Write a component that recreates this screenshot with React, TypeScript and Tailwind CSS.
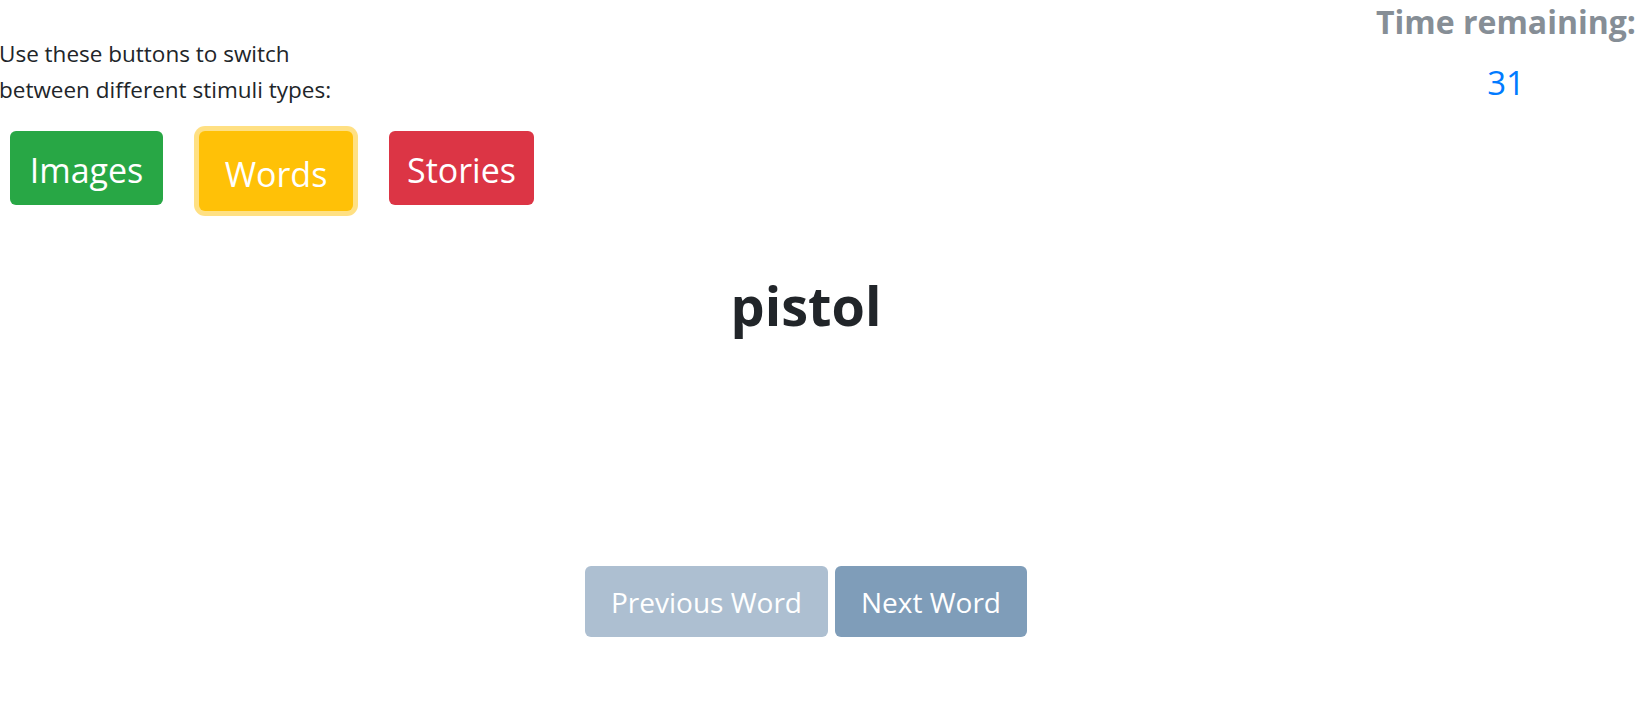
const font = { fontFamily: '"Open Sans", "Noto Sans", sans-serif' };

export default function App() {
  return (
    <div className="w-[1652px] h-[713px] overflow-hidden bg-white text-[#212529]" style={font}>
      <div className="flex justify-between">
        <div className="pt-[36px]">
          <p className="-ml-[1px] text-[22.5px] leading-[36px]">
            Use these buttons to switch
            <br />
            between different stimuli types:
          </p>
          <div className="mt-[23px] ml-[10px] flex items-start gap-[36px]">
            <button className="flex h-[74px] w-[153px] items-center justify-center rounded-[6px] bg-[#28a745] pt-[5px] text-[34px] text-white">
              Images
            </button>
            <button className="flex h-[80px] w-[154px] items-center justify-center rounded-[6px] bg-[#ffc107] pt-[7px] text-[34px] text-white shadow-[0_0_0_5px_rgba(255,193,7,0.5)]">
              Words
            </button>
            <button className="flex h-[74px] w-[145px] items-center justify-center rounded-[6px] bg-[#dc3545] pt-[5px] text-[34px] text-white">
              Stories
            </button>
          </div>
        </div>
        <div className="w-[292px] pt-[2px] text-center">
          <div className="text-[32px] font-bold leading-[40px] text-[#868e96]">Time remaining:</div>
          <div className="mt-[21px] text-[33px] leading-[40px] text-[#007bff]">31</div>
        </div>
      </div>

      <div className="flex w-[1612px] flex-col items-center">
        <h1 className="mt-[61px] text-[54px] font-bold leading-[67px]">pistol</h1>
        <div className="mt-[227px] flex gap-[7px]">
          <button className="h-[71px] w-[243px] rounded-[6px] bg-[#adbfd1] text-[28px] text-white">
            Previous Word
          </button>
          <button className="h-[71px] w-[192px] rounded-[6px] bg-[#7f9db9] text-[28px] text-white">
            Next Word
          </button>
        </div>
      </div>
    </div>
  );
}
